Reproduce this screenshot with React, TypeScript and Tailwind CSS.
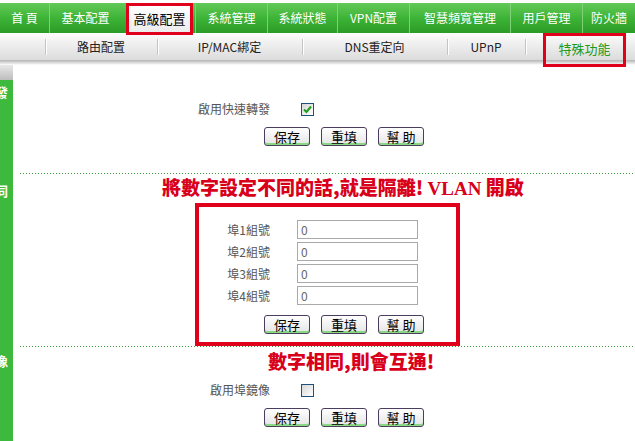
import type { ReactNode } from "react";

const NAV = [
  { label: "首 頁", w: 49 },
  { label: "基本配置", w: 72 },
  { label: "高級配置", w: 74, active: true },
  { label: "系統管理", w: 72 },
  { label: "系統狀態", w: 70 },
  { label: "VPN配置", w: 72 },
  { label: "智慧頻寬管理", w: 101 },
  { label: "用戶管理", w: 72 },
  { label: "防火牆", w: 53 },
];

const SUBNAV = [
  { label: "", w: 45 },
  { label: "路由配置", w: 112 },
  { label: "IP/MAC綁定", w: 145 },
  { label: "DNS重定向", w: 145 },
  { label: "UPnP", w: 78 },
  { label: "特殊功能", w: 110, active: true },
];

function Btn({ children }: { children: ReactNode }) {
  return (
    <button className="h-[19px] w-[46px] rounded-[3px] border border-[#4b3d5e] bg-gradient-to-b from-white to-[#e4e4e4] text-[13px] leading-[15px] text-black shadow-[inset_0_-2px_0_#8ad884]">
      {children}
    </button>
  );
}

function Buttons() {
  return (
    <div className="flex gap-[11px]">
      <Btn>保存</Btn>
      <Btn>重填</Btn>
      <Btn>幫 助</Btn>
    </div>
  );
}

function Checkbox({ checked }: { checked?: boolean }) {
  return (
    <div className="flex h-[13px] w-[13px] items-center justify-center border border-[#1d527f] bg-gradient-to-br from-[#d6d6d6] to-white">
      {checked && (
        <svg width="9" height="9" viewBox="0 0 9 9">
          <path d="M1 4.5 L3.5 7 L8 1.5" fill="none" stroke="#1f9d1f" strokeWidth="2" />
        </svg>
      )}
    </div>
  );
}

function Dotted() {
  return (
    <div className="ml-[7px] h-px bg-[linear-gradient(to_right,#3d9a3d_1px,transparent_1px)] bg-[length:3px_1px]" />
  );
}

function PortRow({ n }: { n: number }) {
  return (
    <div className="flex h-[19px] items-center">
      <div className="w-[71px] text-right text-[12px] text-[#555]">埠{n}組號</div>
      <div className="ml-[27px] flex h-[19px] w-[121px] items-center border border-[#a9a9a9] bg-white pl-[3px] text-[12px] text-[#666]">
        0
      </div>
    </div>
  );
}

export default function App() {
  return (
    <div className="h-[441px] w-[635px] overflow-hidden bg-white font-['Noto_Sans_CJK_TC','Noto_Sans',sans-serif]">
      {/* top menu */}
      <div className="h-[3px]" />
      <div className="flex h-[30px] bg-gradient-to-b from-[#62c957] via-[#3db437] to-[#2b9b26] text-[12px] text-white">
        {NAV.map((item, i) => (
          <div
            key={item.label}
            style={{ width: item.w }}
            className={`relative flex shrink-0 items-center justify-center ${
              i > 0 && !item.active ? "border-l border-[#7fd177]" : ""
            }`}
          >
            {item.active ? (
              <div className="absolute left-[5px] right-[2px] top-0 -bottom-[2px] z-10 flex items-center justify-center border-[3px] border-[#e0001b] bg-gradient-to-b from-white to-[#ececec] text-[13px] text-black">
                {item.label}
              </div>
            ) : (
              item.label
            )}
          </div>
        ))}
      </div>

      {/* sub menu */}
      <div className="flex h-[27px] bg-gradient-to-b from-[#fcfcfc] to-[#dcdcdc] text-[12px] text-[#222]">
        {SUBNAV.map((item, i) => (
          <div
            key={i}
            style={{ width: item.w }}
            className="relative flex shrink-0 items-center justify-center"
          >
            {i > 0 && (
              <div className="absolute left-0 top-[6px] h-[16px] w-px bg-[#c4c4c4] shadow-[1px_0_0_#fff]" />
            )}
            {item.active ? (
              <div className="absolute left-[18px] right-[9px] top-0 -bottom-[7px] z-10 flex items-start justify-center border-[3px] border-[#e0001b] pt-[3px] text-[13px] text-[#229a18]">
                {item.label}
              </div>
            ) : (
              item.label
            )}
          </div>
        ))}
      </div>
      <div className="h-[5px] bg-gradient-to-b from-[#b3b3b3] to-white" />

      <div className="flex h-[376px]">
        {/* left strip */}
        <div className="flex w-[13px] shrink-0 flex-col overflow-hidden">
          <div className="h-[15px] bg-gradient-to-b from-[#e8e8e8] to-[#bdbdbd]" />
          <div className="flex flex-1 flex-col bg-[#3dba3d] text-[13px] font-bold leading-[13px] text-white">
            <span className="mt-[5px] -ml-[5px]">發</span>
            <span className="mt-[86px] -ml-[5px]">同</span>
            <span className="mt-[157px] -ml-[5px]">像</span>
          </div>
        </div>

        {/* main */}
        <div className="flex flex-1 flex-col">
          <div className="mt-[36px] flex h-[16px] items-center">
            <div className="ml-[137px] w-[120px] text-right text-[12px] text-[#555]">啟用快速轉發</div>
            <div className="ml-[31px]">
              <Checkbox checked />
            </div>
          </div>
          <div className="ml-[251px] mt-[10px]">
            <Buttons />
          </div>

          <div className="mt-[27px]">
            <Dotted />
          </div>

          <div className="ml-[149px] mt-[2px] h-[22px] whitespace-nowrap text-[19px] font-black leading-[22px] text-[#d8001a]">
            將數字設定不同的話,就是隔離! <span className="font-['Liberation_Serif',serif]">VLAN</span>{" "}開啟
          </div>

          <div className="ml-[182px] mt-[5px] flex h-[143px] w-[265px] flex-col border-4 border-[#e0001b] pt-[13px]">
            <div className="flex flex-col gap-[3px]">
              <PortRow n={1} />
              <PortRow n={2} />
              <PortRow n={3} />
              <PortRow n={4} />
            </div>
            <div className="ml-[65px] mt-[10px]">
              <Buttons />
            </div>
          </div>
          <Dotted />

          <div className="ml-[255px] mt-[3px] h-[22px] whitespace-nowrap text-[19px] font-black leading-[22px] text-[#d8001a]">
            數字相同,則會互通!
          </div>

          <div className="mt-[10px] flex h-[16px] items-center">
            <div className="ml-[137px] w-[120px] text-right text-[12px] text-[#555]">啟用埠鏡像</div>
            <div className="ml-[31px]">
              <Checkbox />
            </div>
          </div>
          <div className="ml-[251px] mt-[10px]">
            <Buttons />
          </div>
        </div>
      </div>
    </div>
  );
}
